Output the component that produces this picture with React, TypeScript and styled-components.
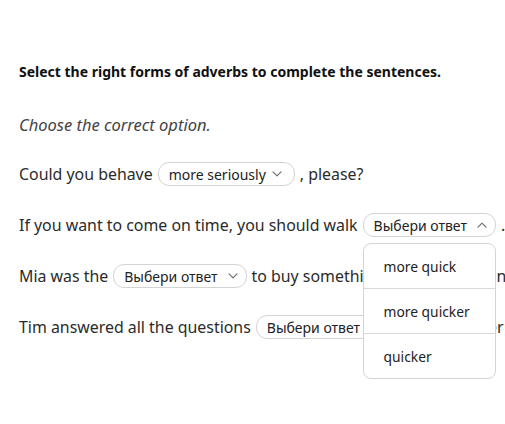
import React from "react";
import styled, { createGlobalStyle } from "styled-components";

const GlobalStyle = createGlobalStyle`
  body {
    margin: 0;
    background: #ffffff;
    font-family: "Noto Sans", "Open Sans", sans-serif;
    color: #222222;
  }
`;

type Part = string | { options?: string[]; value?: string; open?: boolean };

const sentences: Part[][] = [
  ["Could you behave", { value: "more seriously" }, ", please?"],
  [
    "If you want to come on time, you should walk",
    { open: true, options: ["more quick", "more quicker", "quicker"] },
    ".",
  ],
  ["Mia was the", {}, "to buy something at the market in"],
  ["Tim answered all the questions", {}, "than his father"],
];

const Chevron = ({ up }: { up?: boolean }) => (
  <Arrow width="10" height="6" viewBox="0 0 10 6">
    <path
      d={up ? "M1 5.2 L5 1.2 L9 5.2" : "M1 0.8 L5 4.8 L9 0.8"}
      fill="none"
      stroke="#6f6f6f"
      strokeWidth="1.2"
      strokeLinecap="round"
      strokeLinejoin="round"
    />
  </Arrow>
);

const Dropdown = ({ value, open, options }: { value?: string; open?: boolean; options?: string[] }) => (
  <SelectWrap>
    <Select $placeholder={!value}>
      <span>{value ?? "Выбери ответ"}</span>
      <Chevron up={open} />
    </Select>
    {open && options && (
      <Menu>
        {options.map((o) => (
          <Option key={o}>{o}</Option>
        ))}
      </Menu>
    )}
  </SelectWrap>
);

export default function App() {
  return (
    <>
      <GlobalStyle />
      <Page>
        <Title>Select the right forms of adverbs to complete the sentences.</Title>
        <Hint>Choose the correct option.</Hint>
        {sentences.map((parts, i) => (
          <Sentence key={i}>
            {parts.map((p, j) =>
              typeof p === "string" ? (
                <Text key={j}>{p}</Text>
              ) : (
                <Dropdown key={j} value={p.value} open={p.open} options={p.options} />
              )
            )}
          </Sentence>
        ))}
      </Page>
    </>
  );
}

const Page = styled.div`
  padding: 63px 0 0 19px;
  width: 505px;
  height: 424px;
  box-sizing: border-box;
  overflow: hidden;
`;

const Title = styled.h2`
  margin: 0;
  font-size: 14px;
  line-height: 18px;
  font-weight: 700;
  color: #111111;
`;

const Hint = styled.p`
  margin: 33px 0 0;
  font-size: 16.5px;
  line-height: 22px;
  font-style: italic;
  color: #444444;
`;

const Sentence = styled.div`
  display: flex;
  align-items: center;
  gap: 5px;
  margin-top: 27px;
  height: 24px;
  white-space: nowrap;
  font-size: 15.9px;
  color: #2b2b2b;
  &:first-of-type {
    margin-top: 26px;
  }
`;

const Text = styled.span`
  line-height: 24px;
`;

const SelectWrap = styled.span`
  position: relative;
  display: inline-flex;
  flex: none;
`;

const Select = styled.span<{ $placeholder: boolean }>`
  display: inline-flex;
  align-items: center;
  gap: ${(p) => (p.$placeholder ? "10px" : "6px")};
  height: 24px;
  box-sizing: border-box;
  padding: 0 ${(p) => (p.$placeholder ? "8px" : "12px")} 0 10px;
  border: 1px solid #d4d4d4;
  border-radius: 11px;
  background: #ffffff;
  font-size: 14px;
  color: #222222;
`;

const Arrow = styled.svg`
  display: block;
  flex: none;
`;

const Menu = styled.div`
  position: absolute;
  top: calc(100% + 6px);
  left: 0;
  right: 0;
  background: #ffffff;
  border: 1px solid #d4d4d4;
  border-radius: 8px;
  z-index: 2;
`;

const Option = styled.div`
  height: 44px;
  padding-left: 20px;
  display: flex;
  align-items: center;
  font-size: 13.8px;
  color: #222222;
  & + & {
    border-top: 1px solid #d9d9d9;
  }
`;
